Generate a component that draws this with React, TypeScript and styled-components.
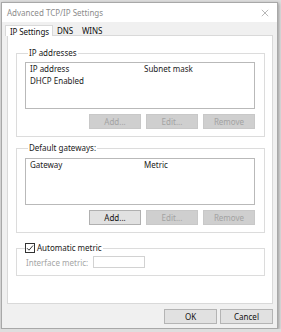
import React from "react";
import styled, { createGlobalStyle, css } from "styled-components";

const GlobalStyle = createGlobalStyle`
  html, body {
    margin: 0;
    padding: 0;
    background: #dedede;
    font-family: "Noto Sans", "Open Sans", sans-serif;
  }
`;

const Window = styled.div`
  width: 277px;
  height: 327px;
  margin: 2px 0 0 1px;
  box-sizing: border-box;
  border: 1px solid #a8a8a8;
  background: #f0f0f0;
  box-shadow: 1px 1px 3px rgba(0, 0, 0, 0.3);
  display: flex;
  flex-direction: column;
`;

const TitleBar = styled.div`
  height: 19px;
  background: #ffffff;
  display: flex;
  align-items: center;
  justify-content: space-between;
  padding: 0 6px 0 5px;
`;

const Title = styled.span`
  font-size: 8px;
  color: #8c8c8c;
`;

const CloseIcon = styled.svg`
  width: 8px;
  height: 8px;
  margin-right: 2px;
`;

const Body = styled.div`
  flex: 1;
  display: flex;
  flex-direction: column;
  padding: 4px 4px 0 5px;
`;

const TabRow = styled.div`
  display: flex;
  align-items: flex-end;
  height: 10px;
  position: relative;
  z-index: 1;
  margin-bottom: -1px;
`;

const Tab = styled.div<{ $active?: boolean }>`
  font-size: 8px;
  line-height: 9px;
  color: #111;
  box-sizing: border-box;
  letter-spacing: -0.1px;
  ${({ $active }) =>
    $active
      ? css`
          height: 11px;
          margin-left: -2px;
          padding: 1px 3px 0 4px;
          background: #fff;
          border: 1px solid #d9d9d9;
          border-bottom: none;
        `
      : css`
          height: 9px;
          margin-bottom: 1px;
          padding: 0 5px 0 4px;
        `}
`;

const Panel = styled.div`
  height: 269px;
  box-sizing: border-box;
  background: #ffffff;
  border: 1px solid #d9d9d9;
  padding: 12px 7px 0 8px;
  display: flex;
  flex-direction: column;
`;

const Group = styled.fieldset<{ $gap?: number }>`
  margin: ${({ $gap }) => $gap ?? 0}px 0 0 0;
  padding: 0 9px 7px 8px;
  border: 1px solid #dcdcdc;
  min-width: 0;
  display: flex;
  flex-direction: column;
`;

const Legend = styled.legend`
  font-size: 8px;
  line-height: 10px;
  color: #1a1a1a;
  padding: 0 1px;
  margin-left: 3px;
  display: flex;
  align-items: center;
`;

const ListBox = styled.div<{ $top: number }>`
  margin-top: ${({ $top }) => $top}px;
  height: 47px;
  box-sizing: border-box;
  border: 1px solid #b9b9b9;
  padding: 0 4px;
`;

const ListRow = styled.div`
  display: flex;
  font-size: 8px;
  line-height: 12px;
  color: #222;
`;

const Cell = styled.span`
  width: 114px;
`;

const ButtonRow = styled.div`
  display: flex;
  justify-content: flex-end;
  gap: 5px;
  margin-top: 5px;
`;

const Button = styled.button<{ $disabled?: boolean }>`
  width: 52px;
  height: 15px;
  padding: 0;
  font-family: inherit;
  font-size: 8px;
  border: 1px solid ${({ $disabled }) => ($disabled ? "#c8c8c8" : "#b0b0b0")};
  background: ${({ $disabled }) => ($disabled ? "#cfcfcf" : "#e1e1e1")};
  color: ${({ $disabled }) => ($disabled ? "#a3a3a3" : "#111")};
`;

const CheckBox = styled.span`
  width: 10px;
  height: 10px;
  box-sizing: border-box;
  border: 1px solid #333;
  background: #fff;
  display: inline-flex;
  align-items: center;
  justify-content: center;
  margin-right: 2px;
  margin-left: -4px;
`;

const MetricRow = styled.div`
  display: flex;
  align-items: center;
  margin-top: 3px;
`;

const MetricLabel = styled.span`
  font-size: 8px;
  color: #a6a6a6;
  width: 67px;
  margin-left: 1px;
`;

const MetricInput = styled.div`
  width: 52px;
  height: 12px;
  box-sizing: border-box;
  border: 1px solid #d2d2d2;
  background: #fff;
`;

const Footer = styled.div`
  display: flex;
  justify-content: flex-end;
  gap: 3px;
  padding: 5px 0 0 0;
`;

const FooterButton = styled.button`
  width: 53px;
  height: 15px;
  padding: 0;
  font-family: inherit;
  font-size: 8px;
  color: #111;
  border: 1px solid #b4b4b4;
  background: #e1e1e1;
`;

export default function App() {
  return (
    <>
      <GlobalStyle />
      <Window>
        <TitleBar>
          <Title>Advanced TCP/IP Settings</Title>
          <CloseIcon viewBox="0 0 10 10">
            <path d="M1 1L9 9M9 1L1 9" stroke="#9a9a9a" strokeWidth="0.9" />
          </CloseIcon>
        </TitleBar>
        <Body>
          <TabRow>
            <Tab $active>IP Settings</Tab>
            <Tab>DNS</Tab>
            <Tab>WINS</Tab>
          </TabRow>
          <Panel>
            <Group>
              <Legend>IP addresses</Legend>
              <ListBox $top={4}>
                <ListRow>
                  <Cell>IP address</Cell>
                  <span>Subnet mask</span>
                </ListRow>
                <ListRow>DHCP Enabled</ListRow>
              </ListBox>
              <ButtonRow>
                <Button $disabled>Add...</Button>
                <Button $disabled>Edit...</Button>
                <Button $disabled>Remove</Button>
              </ButtonRow>
            </Group>
            <Group $gap={6}>
              <Legend>Default gateways:</Legend>
              <ListBox $top={5}>
                <ListRow>
                  <Cell>Gateway</Cell>
                  <span>Metric</span>
                </ListRow>
              </ListBox>
              <ButtonRow>
                <Button>Add...</Button>
                <Button $disabled>Edit...</Button>
                <Button $disabled>Remove</Button>
              </ButtonRow>
            </Group>
            <Group $gap={10}>
              <Legend>
                <CheckBox>
                  <svg width="8" height="8" viewBox="0 0 8 8">
                    <path d="M1 4.2L3 6.2L7 1.5" fill="none" stroke="#222" strokeWidth="0.9" />
                  </svg>
                </CheckBox>
                Automatic metric
              </Legend>
              <MetricRow>
                <MetricLabel>Interface metric:</MetricLabel>
                <MetricInput />
              </MetricRow>
            </Group>
          </Panel>
          <Footer>
            <FooterButton>OK</FooterButton>
            <FooterButton>Cancel</FooterButton>
          </Footer>
        </Body>
      </Window>
    </>
  );
}
